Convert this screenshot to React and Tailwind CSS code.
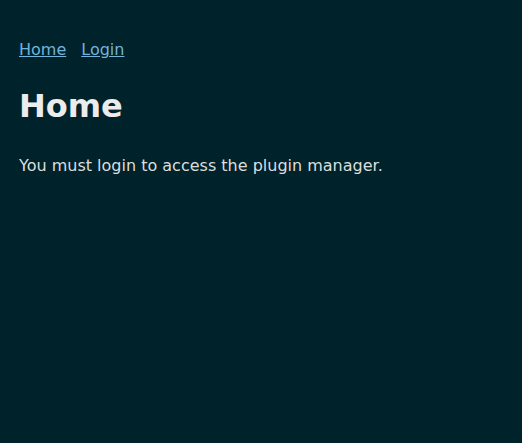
export default function App() {
  return (
    <div className="min-h-[443px] bg-[#00222b] px-[19px] pt-[41px] text-[#dcdede] [font-family:'DejaVu_Sans',Verdana,sans-serif]">
      <nav className="flex gap-[15px] text-[16px] leading-[18px]">
        <a href="#" className="text-[#72b3da] underline">Home</a>
        <a href="#" className="text-[#72b3da] underline">Login</a>
      </nav>
      <h1 className="mt-[29px] text-[32px] font-bold leading-[37px] text-[#ececec]">Home</h1>
      <p className="mt-[32px] text-[16px] leading-[18px]">You must login to access the plugin manager.</p>
    </div>
  );
}
